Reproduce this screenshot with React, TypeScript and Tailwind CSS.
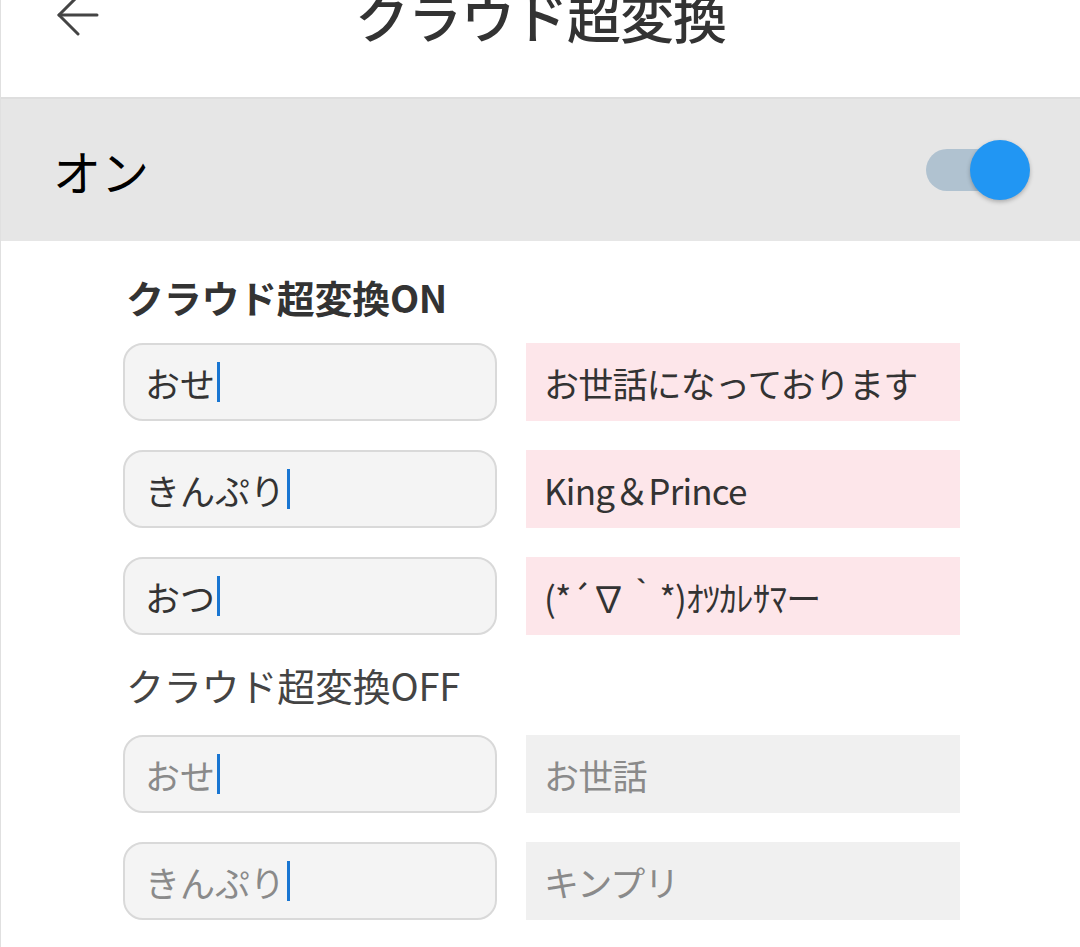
import React from "react";

const jp = { fontFamily: '"Noto Sans CJK JP", "Noto Sans", sans-serif' };

type Row = { input: string; output: string };

const onRows: Row[] = [
  { input: "おせ", output: "お世話になっております" },
  { input: "きんぷり", output: "King＆Prince" },
  { input: "おつ", output: "(*´∇｀*)ｵﾂｶﾚｻﾏー" },
];

const offRows: Row[] = [
  { input: "おせ", output: "お世話" },
  { input: "きんぷり", output: "キンプリ" },
];

function ExampleRow({ row, on }: { row: Row; on: boolean }) {
  return (
    <div className="flex gap-[29px] h-[78px]">
      {/* typed text */}
      <div className="w-[374px] h-full rounded-[20px] border-2 border-[#d9d9d9] bg-[#f4f4f4] flex items-center pl-[20px]">
        <span className={`text-[35px] leading-none ${on ? "text-[#333333]" : "text-[#8a8a8a]"}`}>
          {row.input}
        </span>
        <span className="ml-[2px] w-[3px] h-[40px] bg-[#1976d2]" />
      </div>
      {/* converted text */}
      <div
        className={`w-[434px] h-full flex items-center pl-[18px] ${
          on ? "bg-[#fde6ea] text-[#333333]" : "bg-[#f0f0f0] text-[#8a8a8a]"
        }`}
      >
        <span className="text-[35px] leading-none tracking-[-0.8px]">{row.output}</span>
      </div>
    </div>
  );
}

export default function App() {
  return (
    <div className="h-[947px] w-[1080px] overflow-hidden bg-white border-l border-[#e0e0e0]" style={jp}>
      {/* Header */}
      <div className="relative h-[97px] flex justify-center">
        <svg
          className="absolute left-[55px] top-[-5px]"
          width="44"
          height="44"
          viewBox="0 0 44 44"
          fill="none"
          stroke="#444444"
          strokeWidth="3"
          strokeLinecap="round"
          strokeLinejoin="round"
        >
          <path d="M41 20H3" />
          <path d="M21 2L3 20l19 19" />
        </svg>
        <h1 className="mt-[-16px] text-[54px] leading-[64px] font-medium text-[#333333] tracking-[-1px]">
          クラウド超変換
        </h1>
      </div>

      {/* Toggle band */}
      <div className="h-[144px] bg-[#e6e6e6] border-t-2 border-[#dedede] flex items-center justify-between pl-[52px] pr-[50px]">
        <span className="text-[48px] leading-none text-black">オン</span>
        <div className="relative w-[84px] h-[42px] rounded-full bg-[#b0c2d0] mr-[20px]">
          <div className="absolute right-[-20px] top-[-9px] w-[60px] h-[60px] rounded-full bg-[#2196f3] shadow-[0_2px_4px_rgba(0,0,0,0.25)]" />
        </div>
      </div>

      {/* Examples */}
      <div className="pl-[122px] pt-[30px]">
        <div className="pl-[3px] text-[38px] leading-[52px] font-bold text-[#333333] tracking-[-0.3px]">
          クラウド超変換ON
        </div>
        <div className="mt-[20px] flex flex-col gap-[29px]">
          {onRows.map((r, i) => (
            <ExampleRow key={i} row={r} on />
          ))}
        </div>
        <div className="mt-[24px] pl-[3px] text-[38px] leading-[52px] text-[#444444] tracking-[-0.2px]">
          クラウド超変換OFF
        </div>
        <div className="mt-[24px] flex flex-col gap-[29px]">
          {offRows.map((r, i) => (
            <ExampleRow key={i} row={r} on={false} />
          ))}
        </div>
      </div>
    </div>
  );
}
